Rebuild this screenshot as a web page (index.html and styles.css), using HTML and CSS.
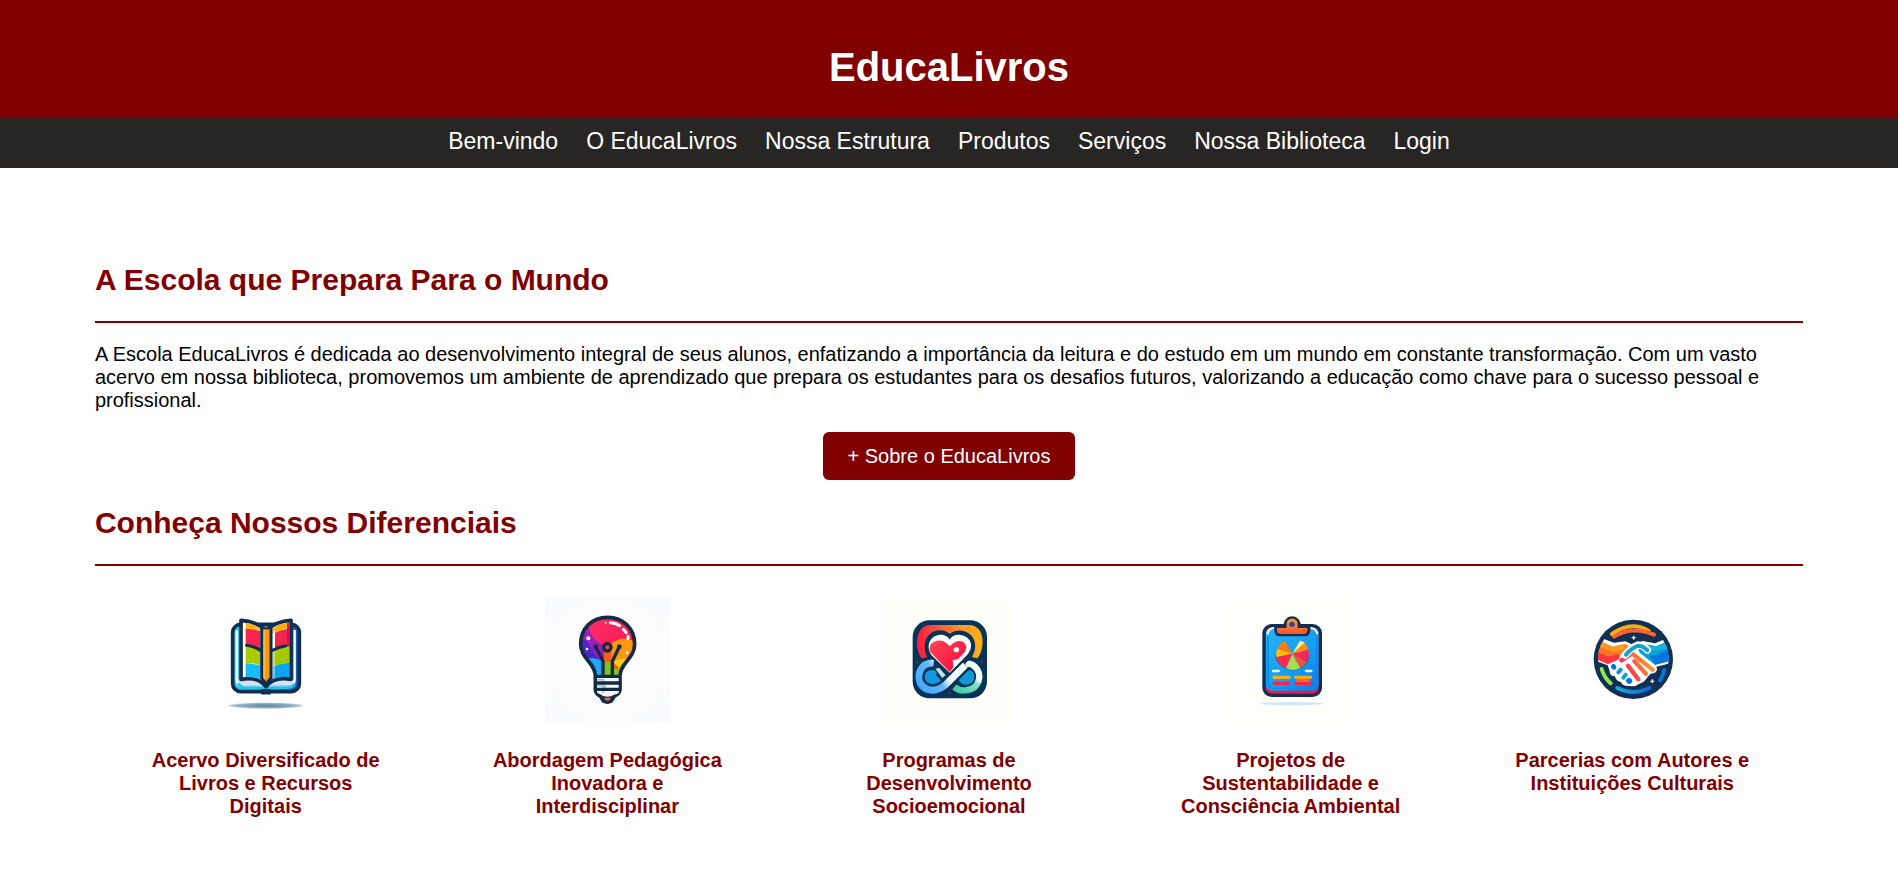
FILE: index.html
```html
<!DOCTYPE html>
<html lang="pt-BR">
<head>
<meta charset="utf-8">
<meta name="viewport" content="width=device-width, initial-scale=1">
<title>EducaLivros</title>
<link rel="stylesheet" href="styles.css">
</head>
<body>
<header class="site-header"><h1 class="site-title">EducaLivros</h1></header>
<nav class="site-nav">
  <a href="#">Bem-vindo</a>
  <a href="#">O EducaLivros</a>
  <a href="#">Nossa Estrutura</a>
  <a href="#">Produtos</a>
  <a href="#">Serviços</a>
  <a href="#">Nossa Biblioteca</a>
  <a href="#">Login</a>
</nav>
<main class="content">
  <section class="section">
    <h2 class="section-title">A Escola que Prepara Para o Mundo</h2>
    <p class="intro">A Escola EducaLivros é dedicada ao desenvolvimento integral de seus alunos, enfatizando a importância da leitura e do estudo em um mundo em constante transformação. Com um vasto acervo em nossa biblioteca, promovemos um ambiente de aprendizado que prepara os estudantes para os desafios futuros, valorizando a educação como chave para o sucesso pessoal e profissional.</p>
    <button class="about-button" type="button">+ Sobre o EducaLivros</button>
  </section>
  <section class="section">
    <h2 class="section-title">Conheça Nossos Diferenciais</h2>
    <div class="features">
      <article class="feature">
        <svg class="feature-icon" viewBox="24 21 375 375" aria-hidden="true">
          <defs>
            <linearGradient id="cover" x1="0" x2="1"><stop offset="0" stop-color="#25d4e8"/><stop offset=".5" stop-color="#35a9e0"/><stop offset="1" stop-color="#0a5cb8"/></linearGradient>
            <radialGradient id="bookShadow"><stop offset="0" stop-color="#5b87a5"/><stop offset=".7" stop-color="#8eacc0"/><stop offset="1" stop-color="#c3d3dd"/></radialGradient>
            <clipPath id="pageLeft"><path d="M143 97Q176 100 195 116V268Q170 258 143 262Z"/></clipPath>
            <clipPath id="pageRight"><path d="M232 116Q254 100 284 97V262Q256 258 232 268Z"/></clipPath>
          </defs>
          <ellipse cx="213" cy="347" rx="111" ry="9" fill="url(#bookShadow)"/>
          <rect x="113" y="103" width="200" height="202" rx="24" fill="url(#cover)" stroke="#102d50" stroke-width="11"/>
          <path d="M203 302H223V309H203Z" fill="#28c5e8" stroke="#102d50" stroke-width="9"/>
          <path d="M125 121V270Q127 290 148 290H280Q298 290 299 270V120" fill="none" stroke="#fff" stroke-width="7"/>
          <path d="M126 268Q165 260 213 282Q252 262 294 269V286H143Q128 283 126 268Z" fill="#d5e2f3"/>
          <path d="M130 280Q137 293 153 293H280Q294 291 299 281" fill="none" stroke="#20c4e8" stroke-width="8"/>
          <path d="M138 91Q183 94 213 121Q243 94 288 91V268Q237 258 213 290Q189 258 138 268Z" fill="#fff" stroke="#102d50" stroke-width="11" stroke-linejoin="round"/>
          <g clip-path="url(#pageLeft)">
            <path d="M152 90H205V125Q178 115 152 120Z" fill="#ffb414"/>
            <path d="M152 117Q178 115 205 127V183Q181 166 152 170Z" fill="#fb254e"/>
            <path d="M152 168Q180 168 205 184V232Q180 216 152 220Z" fill="#a8cc00"/>
            <path d="M152 220Q178 220 205 230V275H152Z" fill="#15bcf9"/>
          </g>
          <g clip-path="url(#pageRight)">
            <path d="M230 90H290V115Q259 115 230 134Z" fill="#ffb000"/>
            <path d="M240 128Q261 117 290 117V170Q260 169 240 180Z" fill="#f42450"/>
            <path d="M276 95H285V265H276Z" fill="#d8103d"/>
            <path d="M232 184Q260 168 285 170V220Q257 220 232 232Z" fill="#a0c900"/>
            <path d="M232 230Q257 220 285 219V270H232Z" fill="#0ba5ee"/>
            <path d="M234 120V265" stroke="#fff" stroke-opacity=".4" stroke-width="12"/>
          </g>
          <path d="M200 118H226V268L213 288L200 268Z" fill="#ff9906"/>
          <path d="M207 122V270" stroke="#ffc45b" stroke-width="5"/>
          <path d="M200 109V265Q210 274 213 288Q216 274 228 265V109M155 166Q181 170 199 183M228 183Q249 171 272 167" fill="none" stroke="#102d50" stroke-width="9" stroke-linecap="round"/>
        </svg>
        <h3 class="feature-title">Acervo Diversificado de Livros e Recursos Digitais</h3>
      </article>
      <article class="feature">
        <svg class="feature-icon" viewBox="24 21 375 375" aria-hidden="true">
          <defs>
            <radialGradient id="paper" r=".72"><stop offset="0" stop-color="#fff"/><stop offset=".65" stop-color="#fdfdff"/><stop offset="1" stop-color="#f7f9fd"/></radialGradient>
            <linearGradient id="pink" x1="0" x2="1" y2="1"><stop offset="0" stop-color="#ff3370"/><stop offset="1" stop-color="#fa174d"/></linearGradient>
            <clipPath id="bulb"><path d="M212 82C164 82 131 116 131 162C131 207 175 218 175 258H249C249 218 293 207 293 162C293 116 258 82 212 82Z"/></clipPath>
          </defs>
          <path d="M24 21H399V396H24Z" fill="url(#paper)"/>
          <g clip-path="url(#bulb)">
            <path d="M120 70H300V265H120Z" fill="#ff5b1c"/>
            <path d="M120 70H300V158Q254 137 216 177L155 143Z" fill="url(#pink)"/>
            <path d="M223 160Q259 134 300 158V210Q254 202 223 225Z" fill="#ff9712"/>
            <path d="M151 100Q159 149 203 168L199 218L120 204V100Z" fill="#9b1dbd"/>
            <path d="M125 142Q145 148 157 165Q168 190 186 208L139 207L120 175Z" fill="#4a25ca"/>
            <path d="M154 205Q177 201 199 215V264H154Z" fill="#20a8f5"/>
            <path d="M200 215H227V264H200Z" fill="#78c420"/>
            <path d="M229 216Q251 201 282 207L249 238Z" fill="#ffd00b"/>
            <path d="M229 236H263V264H229Z" fill="#88c51c"/>
          </g>
          <path d="M212 82C164 82 131 116 131 162C131 207 175 218 175 258V300Q177 313 190 318L199 333Q211 340 223 333L232 318Q246 313 249 300V258C249 218 293 207 293 162C293 116 258 82 212 82Z" fill="none" stroke="#152b44" stroke-width="11"/>
          <path d="M180 260H245V309Q236 316 211 316Q187 316 180 307Z" fill="#f4f8fb"/>
          <path d="M180 269H199V310M180 288H205V304" stroke="#a8bdca" stroke-width="5" fill="none"/>
          <path d="M173 259H251M173 279H251M173 298H251" stroke="#152b44" stroke-width="10"/>
          <path d="M185 313Q211 327 239 313L231 329Q211 345 193 329Z" fill="#152b44"/>
          <path d="M202 323H221Q220 332 211 332Q203 332 202 323Z" fill="#f46325"/>
          <path d="M176 170L198 213V259M247 170L226 214V259" fill="none" stroke="#152b44" stroke-width="10" stroke-linecap="round"/>
          <circle cx="176" cy="170" r="7" fill="#152b44"/><circle cx="247" cy="170" r="7" fill="#152b44"/>
          <circle cx="211" cy="172" r="11" fill="#f74b1d" stroke="#152b44" stroke-width="10"/>
          <path d="M220 98Q237 99 248 107M259 118Q264 122 267 128M273 139V146" fill="none" stroke="#fff" stroke-width="9" stroke-linecap="round"/>
          <g fill="#fff"><circle cx="206" cy="98" r="3"/><circle cx="154" cy="145" r="6"/><circle cx="150" cy="177" r="4"/><circle cx="270" cy="188" r="4"/></g>
        </svg>
        <h3 class="feature-title">Abordagem Pedagógica Inovadora e Interdisciplinar</h3>
      </article>
      <article class="feature">
        <svg class="feature-icon" viewBox="20 21 375 375" aria-hidden="true">
          <defs>
            <linearGradient id="warm" gradientUnits="userSpaceOnUse" x1="112" x2="306" y1="160" y2="160"><stop offset="0" stop-color="#ff1640"/><stop offset=".3" stop-color="#ff5142"/><stop offset=".65" stop-color="#ff932d"/><stop offset="1" stop-color="#ffb11a"/></linearGradient>
            <linearGradient id="heart" x1="0" x2="1" y2="1"><stop offset="0" stop-color="#ff4b57"/><stop offset=".5" stop-color="#ff2547"/><stop offset="1" stop-color="#f20d3d"/></linearGradient>
            <linearGradient id="blueLoop" gradientUnits="userSpaceOnUse" x1="120" y1="300" x2="258" y2="210"><stop offset="0" stop-color="#42a5ff"/><stop offset=".4" stop-color="#64b9f7"/><stop offset=".55" stop-color="#f1faff"/></linearGradient>
            <linearGradient id="greenLoop" gradientUnits="userSpaceOnUse" x1="235" y1="300" x2="280" y2="220"><stop offset="0" stop-color="#43d0a7"/><stop offset=".5" stop-color="#90dfcb"/><stop offset=".6" stop-color="#f3fcff"/></linearGradient>
          </defs>
          <path d="M20 21H395V396H20Z" fill="#fffef9"/>
          <rect x="100" y="91" width="223" height="234" rx="50" fill="#063456"/>
          <path d="M127 205C105 177 105 105 155 105H268C321 105 317 181 294 205L275 200Q290 170 276 142Q253 112 211 132Q162 111 143 147Q130 176 143 202Z" fill="url(#warm)"/>
          <path d="M112 209L117 218L111 223ZM309 208V221L303 217ZM205 311L211 305L217 312Z" fill="#ad174b"/>
          <ellipse cx="159" cy="263" rx="27" ry="23" fill="#1198e3"/>
          <ellipse cx="264" cy="263" rx="27" ry="23" fill="#1198d5"/>
          <path d="M181 243L208 274Q228 303 261 300C302 298 312 254 288 229Q278 217 261 222" fill="none" stroke="#063456" stroke-width="32"/>
          <path d="M225 291Q242 305 264 300C300 296 311 253 287 230Q276 219 258 221" fill="none" stroke="url(#greenLoop)" stroke-width="19"/>
          <path d="M211 264L148 206C120 165 145 121 180 121C195 121 205 126 211 132C222 122 235 120 248 122C285 128 300 168 276 203Z" fill="#063456"/>
          <path d="M165 235L188 267L202 256L180 231Z" fill="#bae4ed" stroke="#063456" stroke-width="4"/>
          <path d="M163 219C119 215 108 266 129 288C150 309 181 301 201 282L258 225" fill="none" stroke="#063456" stroke-width="36"/>
          <path d="M163 219C119 215 108 266 129 288C150 309 181 301 201 282L258 225" fill="none" stroke="url(#blueLoop)" stroke-width="21"/>
          <path d="M211 256L151 199L211 140L271 197Z" fill="#063456"/>
          <path d="M211 248L156 195C135 160 160 134 184 134C198 134 207 141 211 149C217 139 229 133 243 135C272 139 286 165 266 192L231 228Z" fill="#fff"/>
          <path d="M211 246L153 187Q144 166 164 155Q190 143 211 169Q233 146 252 156Q269 169 254 188L237 207L220 211L222 232Z" fill="url(#heart)"/>
          <circle cx="231" cy="179" r="8" fill="#fff"/>
        </svg>
        <h3 class="feature-title">Programas de Desenvolvimento Socioemocional</h3>
      </article>
      <article class="feature">
        <svg class="feature-icon" viewBox="18 21 375 375" aria-hidden="true">
          <defs>
            <linearGradient id="board" x1="0" x2="1" y2="1"><stop offset="0" stop-color="#25b4f6"/><stop offset=".6" stop-color="#159df2"/><stop offset="1" stop-color="#0879ec"/></linearGradient>
            <linearGradient id="clip" x1="0" x2="0" y2="1"><stop offset="0" stop-color="#ff9b3b"/><stop offset="1" stop-color="#ff5226"/></linearGradient>
          </defs>
          <path d="M18 21H393V396H18Z" fill="#fffffc"/>
          <ellipse cx="210" cy="341" rx="95" ry="5" fill="#d0e6f8"/>
          <rect x="126" y="107" width="169" height="209" rx="23" fill="#ef164c" stroke="#112f55" stroke-width="10"/>
          <rect x="132" y="113" width="158" height="189" rx="17" fill="url(#board)"/>
          <path d="M138 142V278Q139 292 153 295H272Q284 291 285 277V142" fill="none" stroke="#078ceb" stroke-width="5"/>
          <path d="M136 131Q140 116 154 114M267 114Q281 116 286 130" fill="none" stroke="#fff" stroke-width="6" stroke-linecap="round"/>
          <path d="M157 108H184C187 68 235 70 237 108H265V122Q263 139 248 139H173Q158 139 157 122Z" fill="#112f55"/>
          <path d="M165 114H194V102C194 81 227 81 227 102V114H256V123Q254 132 245 132H176Q166 132 165 123Z" fill="url(#clip)"/>
          <circle cx="210" cy="103" r="8" fill="#164f91"/>
          <path d="M162 195A50 50 0 0 0 260 199" fill="none" stroke="#087cc7" stroke-width="8"/>
          <path d="M211 191L188 152A49 49 0 0 0 166 177Z" fill="#ff7c0b"/>
          <path d="M211 191L166 177A50 50 0 0 0 162 202Z" fill="#ffbe08"/>
          <path d="M211 191L162 202A50 50 0 0 0 192 235Z" fill="#fa294e"/>
          <path d="M211 191L192 235A50 50 0 0 0 235 234Z" fill="#a9dc55"/>
          <path d="M211 191L235 234A50 50 0 0 0 254 216Z" fill="#ef5634"/>
          <path d="M211 191L254 216A50 50 0 0 0 259 179Z" fill="#f72558"/>
          <path d="M211 191L259 179A50 50 0 0 0 248 158Z" fill="#ff8d18"/>
          <path d="M211 191L248 158A50 50 0 0 0 234 152Z" fill="#fff27f"/>
          <path d="M153 243H170M252 243H268" stroke="#fff" stroke-width="7" stroke-linecap="round"/>
          <path d="M156 262H201M221 262H266" stroke="#ffad12" stroke-width="10" stroke-linecap="round"/>
          <path d="M156 280H201M221 280H266" stroke="#f72352" stroke-width="10" stroke-linecap="round"/>
          <path d="M219 266H266L258 271L266 276H219L225 271Z" fill="#ff6c13"/>
        </svg>
        <h3 class="feature-title">Projetos de Sustentabilidade e Consciência Ambiental</h3>
      </article>
      <article class="feature">
        <svg class="feature-icon" viewBox="21 21 375 375" aria-hidden="true">
          <defs>
            <clipPath id="badge"><circle cx="211" cy="208" r="106"/></clipPath>
            <linearGradient id="fingers" gradientUnits="userSpaceOnUse" x1="185" y1="245" x2="250" y2="210"><stop offset="0" stop-color="#fd2858"/><stop offset="1" stop-color="#ff922d"/></linearGradient>
            <linearGradient id="blueArc"><stop offset="0" stop-color="#19a8dd"/><stop offset="1" stop-color="#0769d5"/></linearGradient>
          </defs>
          <circle cx="211" cy="208" r="119" fill="#102f52"/>
          <g fill="none" stroke-width="12" stroke-linecap="round">
            <path d="M147 132Q206 91 257 123" stroke="#ffad0e"/>
            <path d="M153 140Q208 106 273 134" stroke="#ff6136"/>
            <path d="M116 237Q124 264 143 280" stroke="#89e750"/>
            <path d="M163 294Q211 318 260 293" stroke="url(#blueArc)"/>
            <path d="M291 271Q300 257 304 240" stroke="#0874d8"/>
          </g>
          <g clip-path="url(#badge)">
            <path d="M100 138L153 158L187 154L213 166L239 153L276 160L325 140V219L278 231Q275 250 257 254Q248 276 229 281Q215 292 199 288Q178 289 174 276Q158 273 156 259Q139 258 140 242L134 226L98 213Z" fill="#fff"/>
            <path d="M98 147L151 171L185 162L202 172L176 203L155 214L135 222L97 205Z" fill="#ff7326"/>
            <path d="M100 148L147 171Q170 162 191 163L184 178Q158 190 143 184L98 164Z" fill="#ff9b1b"/>
            <path d="M97 183L136 200L165 192L171 205L135 222L97 207Z" fill="#ff343f"/>
            <path d="M225 169L244 161L278 169L325 150V212L276 224L230 191Z" fill="#06a1da"/>
            <path d="M260 197Q290 198 325 171V212L276 224Z" fill="#0675e2"/>
            <path d="M240 174Q274 182 323 165" fill="none" stroke="#1bb4dd" stroke-width="13"/>
          </g>
          <path d="M185 213L213 191Q230 200 270 238M216 215L249 250M202 230L226 268M179 214Q179 193 205 190Z" fill="none" stroke="#fff" stroke-width="23" stroke-linejoin="round" stroke-linecap="round"/>
          <path d="M175 211L207 190L269 239M214 213L249 251M195 227L226 268" fill="none" stroke="url(#fingers)" stroke-width="13" stroke-linejoin="round" stroke-linecap="round"/>
          <path d="M186 195Q206 172 225 165Q242 165 253 180" fill="none" stroke="#fff" stroke-width="22" stroke-linecap="round"/>
          <path d="M189 194Q207 173 226 167Q242 168 253 181" fill="none" stroke="#159fd0" stroke-width="12" stroke-linecap="round"/>
          <g fill="none" stroke-linecap="round">
            <path d="M151 231L153 232M172 239L165 247M187 254L180 263M198 272L199 273" stroke="#fff" stroke-width="27"/>
            <path d="M151 229L153 232" stroke="#086bdd" stroke-width="14"/>
            <path d="M173 239L166 247" stroke="#1195d1" stroke-width="12"/>
            <path d="M188 254L181 263" stroke="#10a2d2" stroke-width="12"/>
            <path d="M198 272L199 273" stroke="#0871e3" stroke-width="17"/>
          </g>
          <path d="M212 137V149M206 143H218M268 268V280M262 274H274" stroke="#e8f6ff" stroke-width="4"/>
        </svg>
        <h3 class="feature-title">Parcerias com Autores e Instituições Culturais</h3>
      </article>
    </div>
  </section>
</main>
</body>
</html>
```
FILE: styles.css
```css
* { box-sizing: border-box; }
body {
  margin: 0;
  background: #fff;
  color: #000;
  font-family: "Liberation Sans", Arial, sans-serif;
  font-size: 20px;
  line-height: 23px;
}
.site-header {
  padding: 44px 20px 27px;
  background: #800000;
  color: #fff;
  text-align: center;
}
.site-title {
  margin: 0;
  font-size: 40px;
  line-height: 46px;
}
.site-nav {
  display: flex;
  flex-wrap: wrap;
  justify-content: center;
  gap: 0 28px;
  padding: 11px 20px 13px;
  background: #272625;
}
.site-nav a {
  color: #fff;
  font-size: 23px;
  line-height: 27px;
  text-decoration: none;
}
.content { padding: 94px 5% 60px; }
.section {
  display: flex;
  flex-direction: column;
}
.section + .section { margin-top: 25px; }
.section-title {
  margin: 0 0 20px;
  padding-bottom: 24px;
  border-bottom: 2px solid #800000;
  color: #800000;
  font-size: 30px;
  line-height: 35px;
}
.intro { margin: 0 0 20px; }
.about-button {
  align-self: center;
  padding: 12px 25px;
  border: 0;
  border-radius: 6px;
  background: #800000;
  color: #fff;
  font: inherit;
  line-height: 24px;
}
.features {
  display: grid;
  grid-template-columns: repeat(5, 1fr);
  padding-top: 11px;
}
.feature {
  display: flex;
  flex-direction: column;
  align-items: center;
  padding: 0 48px;
}
.feature-icon {
  width: 125px;
  height: 125px;
}
.feature-title {
  margin: 27px 0 0;
  color: #800000;
  font-size: 20px;
  line-height: 23px;
  text-align: center;
}
```
